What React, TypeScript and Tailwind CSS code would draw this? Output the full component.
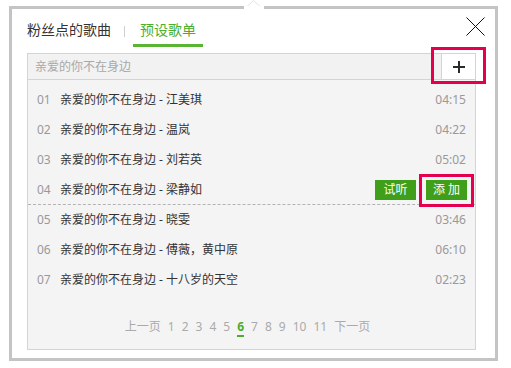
import React from "react";

const rows = [
  { n: "01", t: "亲爱的你不在身边 - 江美琪", d: "04:15" },
  { n: "02", t: "亲爱的你不在身边 - 温岚", d: "04:22" },
  { n: "03", t: "亲爱的你不在身边 - 刘若英", d: "05:02" },
  { n: "04", t: "亲爱的你不在身边 - 梁静如", d: "" },
  { n: "05", t: "亲爱的你不在身边 - 晓雯", d: "03:46" },
  { n: "06", t: "亲爱的你不在身边 - 傅薇，黄中原", d: "06:10" },
  { n: "07", t: "亲爱的你不在身边 - 十八岁的天空", d: "02:23" },
];

const pages = ["1", "2", "3", "4", "5", "6", "7", "8", "9", "10", "11"];

export default function App() {
  return (
    <div className="relative w-[511px] h-[368px] bg-white pt-[6px] pl-[9px] font-['Noto_Sans','Noto_Sans_CJK_SC',sans-serif]">
      <div className="w-[489px] h-[355px] border-[3px] border-[#c4c4c4] flex flex-col pl-[15px] pr-[10px]">
        {/* tabs */}
        <div className="flex h-[38px] shrink-0">
          <div className="pt-[11px] text-[14px] leading-[20px] text-[#333]">粉丝点的歌曲</div>
          <div className="ml-[13px] mt-[17px] w-px h-[11px] bg-[#cfcfcf]" />
          <div className="ml-[8px] px-[7px] pt-[11px] pb-[4px] border-b-[3px] border-[#5bb535] text-[14px] leading-[20px] text-[#4cae2a]">
            预设歌单
          </div>
          <div className="ml-auto mt-[8px]">
            <svg width="19" height="19" viewBox="0 0 19 19">
              <path d="M0.5 0.5 L18.5 18.5 M18.5 0.5 L0.5 18.5" stroke="#111" strokeWidth="1" fill="none" />
            </svg>
          </div>
        </div>
        {/* panel */}
        <div className="mt-[6px] mr-[9px] mb-[8px] flex-1 border border-[#d4d4d4] bg-[#f4f4f4] flex flex-col">
          <div className="flex h-[26px] shrink-0 border-b border-[#d4d4d4]">
            <div className="flex-1 bg-[#f2f2f2] pl-[7px] text-[12px] leading-[25px] text-[#a8a8a8]">亲爱的你不在身边</div>
            <div className="w-[34px] bg-white border-l border-[#d4d4d4] flex items-center justify-center">
              <svg width="12" height="12" viewBox="0 0 12 12">
                <path d="M6 0 V12 M0 6 H12" stroke="#2a2a2a" strokeWidth="2" fill="none" />
              </svg>
            </div>
          </div>
          <div className="pt-[5px] flex flex-col">
            {rows.map((r) =>
              r.n === "04" ? (
                <div key={r.n} className="h-[30px] flex items-center pl-[9px] pr-[8px] border-b border-dashed border-[#b3b3b3] text-[12px]">
                  <span className="w-[23px] text-[#999]">{r.n}</span>
                  <span className="text-[#333]">{r.t}</span>
                  <span className="ml-auto flex gap-[10px]">
                    <span className="w-[41px] h-[20px] bg-[#3f9f1b] text-white flex items-center justify-center leading-none">试听</span>
                    <span className="w-[41px] h-[20px] bg-[#3f9f1b] text-white flex items-center justify-center leading-none">添 加</span>
                  </span>
                </div>
              ) : (
                <div key={r.n} className="h-[30px] flex items-center pl-[9px] pr-[9px] text-[12px]">
                  <span className="w-[23px] text-[#999]">{r.n}</span>
                  <span className="text-[#333]">{r.t}</span>
                  <span className="ml-auto text-[#999]">{r.d}</span>
                </div>
              )
            )}
          </div>
          <div className="mt-[24px] flex justify-center items-start gap-[7px] pr-[8px] text-[12px] leading-[16px] text-[#aaa]">
            <span>上一页</span>
            {pages.map((p) =>
              p === "6" ? (
                <span key={p} className="text-[#4cae2a] font-bold border-b-2 border-[#4cae2a]">{p}</span>
              ) : (
                <span key={p}>{p}</span>
              )
            )}
            <span>下一页</span>
          </div>
        </div>
      </div>
      {/* top notch */}
      <svg className="absolute left-[244px] top-0" width="20" height="10" viewBox="0 0 20 10">
        <polygon points="0,9 9.5,0.5 19,9" fill="#fff" stroke="#e2e2e2" strokeWidth="1" />
        <rect x="0" y="6" width="20" height="4" fill="#fff" />
      </svg>
      {/* highlight boxes */}
      <div className="absolute left-[431px] top-[47px] w-[55px] h-[37px] border-[3px] border-[#e5004f]" />
      <div className="absolute left-[419px] top-[174px] w-[55px] h-[33px] border-[3px] border-[#e5004f]" />
    </div>
  );
}
